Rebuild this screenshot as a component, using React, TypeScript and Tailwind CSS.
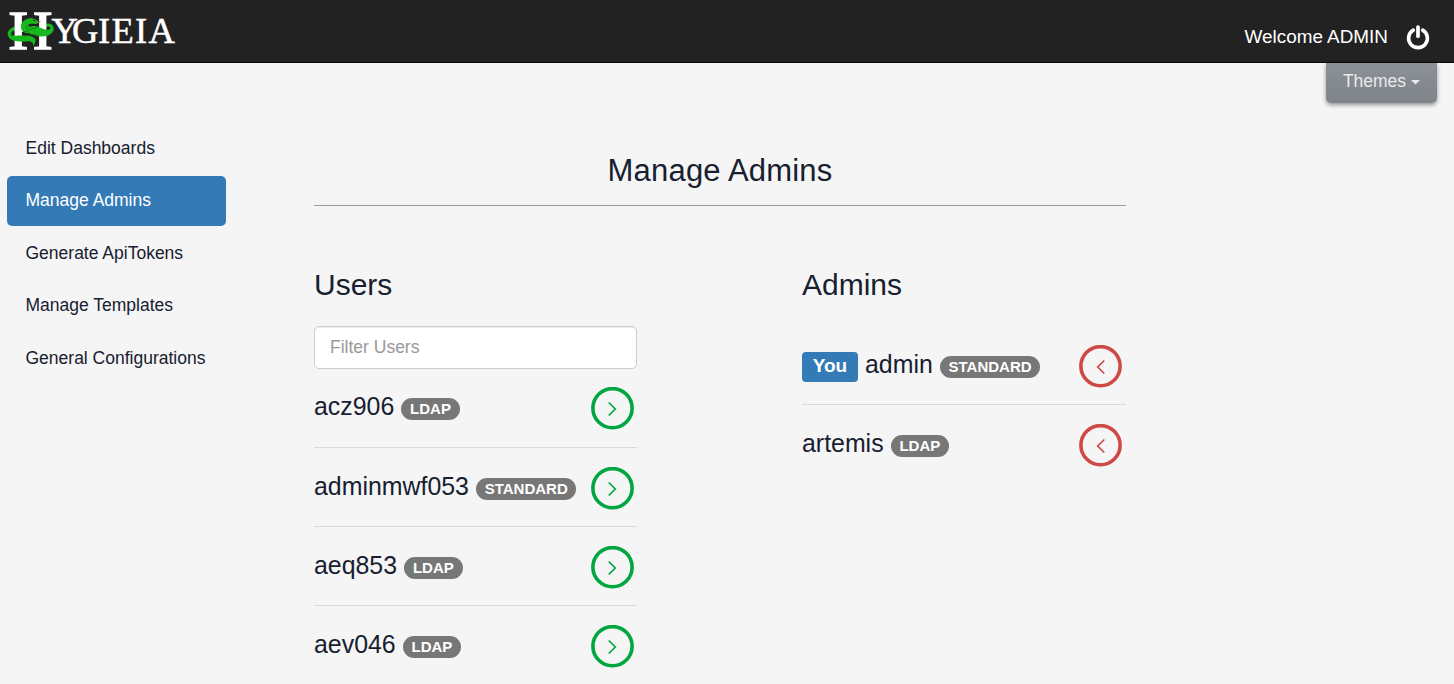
import React from "react";

type Account = { name: string; type: "LDAP" | "STANDARD"; you?: boolean };

const navItems = [
  "Edit Dashboards",
  "Manage Admins",
  "Generate ApiTokens",
  "Manage Templates",
  "General Configurations",
];

const users: Account[] = [
  { name: "acz906", type: "LDAP" },
  { name: "adminmwf053", type: "STANDARD" },
  { name: "aeq853", type: "LDAP" },
  { name: "aev046", type: "LDAP" },
];

const admins: Account[] = [
  { name: "admin", type: "STANDARD", you: true },
  { name: "artemis", type: "LDAP" },
];

function Logo() {
  return (
    <svg width="176" height="62" viewBox="0 0 176 62" className="overflow-visible" fill="none" role="img" aria-label="Hygieia">
      {/* parts of the coils that pass behind the letter */}
      <path d="M20 28C12 28 9 31 9.5 35" stroke="#17b81d" strokeWidth="3.4" />
      <path d="M45 25.5C50 24 53 26 52 31" stroke="#17b81d" strokeWidth="3" />
      <text x="8.5" y="48.5" fontFamily="Liberation Serif, serif" fontSize="54.4" textLength="44" lengthAdjust="spacingAndGlyphs" fill="#fff" stroke="#fff" strokeWidth="1.3">H</text>
      <text x="51.5 72 98 111.5 135 148.5" y="42.5" fontFamily="Liberation Serif, serif" fontSize="36.5" fill="#fff" stroke="#fff" strokeWidth=".5">YGIEIA</text>
      {/* lower coil and tail */}
      <path d="M8 32C8 35.500 13 36 20 35.500C27 35 35.500 36 35.500 40C35.500 43 34 44.500 33.500 47.500C33.500 44 33 41.300 28 41.300C22 41.800 15 41.800 11 39.500C8 37.500 7.500 34 8 32Z" fill="#17b81d" />
      {/* neck, upper coil and head */}
      <path d="M31 18C24 19 20.500 23 21 27.500C21.500 32 25 33.500 29 33C35 36.500 44 38 50 34.500C54 32 54 27 51.500 25C52 29 49 30.500 45 29.500C39 28 37 25 31 26.500C29 27 28 26 28.500 25C29.500 23.500 32 23.500 36 24L39.500 22.500L36 19.500Z" fill="#17b81d" />
      <path d="M23 31.500C28 32.500 31 27.500 37 27.800M24 36C30 35.500 33 33 38 35.500M29 24.500C26 26 25.500 28 28 28.500" stroke="#14641a" strokeWidth=".7" />
      <path d="M33 20.500H35.500" stroke="#173a18" strokeWidth=".9" />
      <path d="M36 21.800L40.500 21.500" stroke="#b23b34" strokeWidth=".7" />
    </svg>
  );
}

function PowerIcon() {
  return (
    <svg width="24" height="26" viewBox="0 0 24 26" fill="none" stroke="#fff" strokeLinecap="round">
      <path d="M7.3 6.1A9.4 9.4 0 1 0 16.7 6.1" strokeWidth="3.6" />
      <path d="M12 3V12.2" strokeWidth="3.7" />
    </svg>
  );
}

function MoveButton({ direction }: { direction: "left" | "right" }) {
  const right = direction === "right";
  return (
    <button
      aria-label={right ? "Make admin" : "Remove admin"}
      className={right ? "h-[43px] w-[43px] shrink-0 text-[#00a63f]" : "h-[43px] w-[43px] shrink-0 text-[#cf4a46]"}
    >
      <svg width="43" height="43" viewBox="0 0 43 43" fill="none" stroke="currentColor">
        <circle cx="21.5" cy="21.2" r="19.6" strokeWidth="3.6" />
        <path d={right ? "M17.700 15.500L24.300 22L17.700 28.500" : "M25.300 15.500L18.700 22L25.300 28.500"} strokeWidth="1.7" />
      </svg>
    </button>
  );
}

function AccountRow({ account, direction }: { account: Account; direction: "left" | "right" }) {
  const right = direction === "right";
  return (
    <li
      className={
        right
          ? "flex h-[79px] items-start justify-between border-b border-[#dadada] pt-[19px] pr-[3px] first:pt-[18px] last:border-0"
          : "flex h-[79px] items-start justify-between border-b border-[#dadada] pt-[19px] pr-1 last:border-0"
      }
    >
      <div className="flex h-9 items-start">
        {account.you && (
          <span className="mt-[7px] mr-[7px] flex h-[30px] w-14 items-center justify-center rounded-[4px] bg-[#337ab7] pb-px text-[19px] font-bold text-white">
            You
          </span>
        )}
        <span className="pt-px text-[24.9px] leading-9">{account.name}</span>
        <span
          className={
            account.type === "LDAP"
              ? "mt-[10.5px] ml-[7px] flex h-[22.5px] w-[58.5px] items-center justify-center rounded-full bg-[#777] text-[15px] font-bold text-white"
              : "mt-[10.5px] ml-[7px] flex h-[22.5px] w-[100.5px] items-center justify-center rounded-full bg-[#777] text-[15px] font-bold text-white"
          }
        >
          {account.type}
        </span>
      </div>
      <MoveButton direction={direction} />
    </li>
  );
}

export default function App() {
  return (
    <div className="flex h-[684px] w-[1454px] flex-col overflow-hidden bg-[#f5f5f5] font-['Liberation_Sans',Arial,sans-serif] text-[#172030]">
      <header className="flex h-[63px] shrink-0 justify-between border-b border-[#080808] bg-[#222]">
        <Logo />
        <div className="flex items-center pt-3 pr-6 text-white">
          <span className="mt-px mr-[18px] text-[18.9px]">Welcome ADMIN</span>
          <PowerIcon />
        </div>
      </header>

      <div className="flex grow items-start">
        <nav className="flex w-[226px] shrink-0 flex-col gap-[2.5px] pt-[60.5px] pl-[7px] text-[17.5px]">
          {navItems.map((item) => (
            <a
              key={item}
              className={
                item === "Manage Admins"
                  ? "flex h-[50px] items-center rounded-[5px] bg-[#337ab7] pb-[2px] pl-[18.5px] text-white"
                  : "flex h-[50px] items-center pb-px pl-[18.5px]"
              }
            >
              {item}
            </a>
          ))}
        </nav>

        <main className="ml-[88px] w-[812px] shrink-0 pt-[87px]">
          <h1 className="h-14 border-b border-[#9c9c9c] text-center text-[31px] leading-[41px] tracking-[0.2px]">
            Manage Admins
          </h1>
          <div className="flex justify-between pt-[59px]">
            <section className="w-[323px]">
              <h2 className="h-[61px] text-[30px] leading-10">Users</h2>
              <input
                placeholder="Filter Users"
                className="block h-[43px] w-full rounded-[5px] border border-[#ccc] bg-white px-[15px] text-[17.5px] shadow-[inset_0_1px_1px_rgba(0,0,0,0.075)] placeholder:text-[#999]"
              />
              <ul>
                {users.map((user) => (
                  <AccountRow key={user.name} account={user} direction="right" />
                ))}
              </ul>
            </section>
            <section className="w-[324px]">
              <h2 className="h-[61px] text-[30px] leading-10">Admins</h2>
              <ul>
                {admins.map((admin) => (
                  <AccountRow key={admin.name} account={admin} direction="left" />
                ))}
              </ul>
            </section>
          </div>
        </main>

        <button className="mr-[17px] ml-auto flex h-10 w-[111px] items-center justify-center rounded-b-[5px] bg-linear-to-b from-[#8c9097] to-[#7f848b] pb-1 text-[17.5px] text-[#e9e9e9] shadow-[0_2px_4px_rgba(0,0,0,0.4)]">
          Themes
          <svg width="9" height="5" viewBox="0 0 9 5" className="mt-[3px] ml-[5px]" fill="currentColor">
            <path d="M0 0H9L4.5 4.5Z" />
          </svg>
        </button>
      </div>
    </div>
  );
}
